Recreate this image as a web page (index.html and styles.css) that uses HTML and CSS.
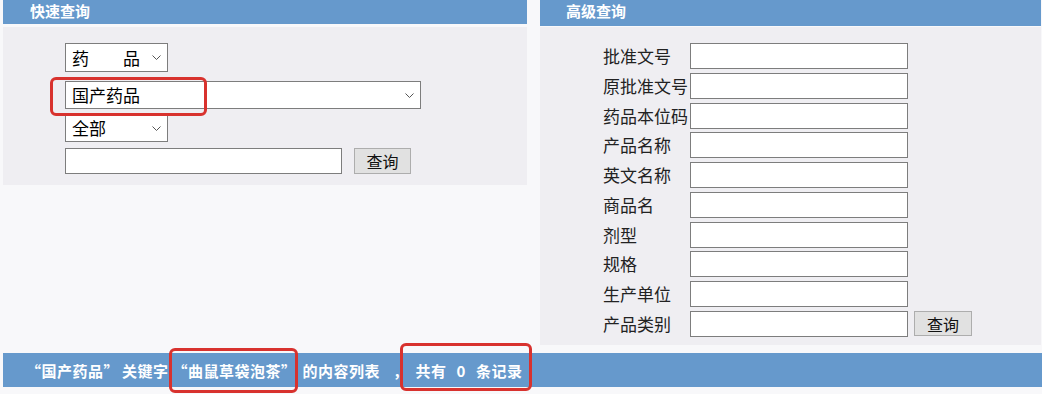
FILE: index.html
```html
<!DOCTYPE html>
<html lang="zh-CN">
<head>
<meta charset="utf-8">
<title>药品查询</title>
<link rel="stylesheet" href="styles.css">
</head>
<body>
<div class="page">
  <div class="top">
    <section class="col col-left">
      <div class="bar bar-left"><span class="bar-title">快速查询</span></div>
      <div class="panel quick">
        <div class="select sel-1"><span>药　　品</span><svg class="chev" width="9" height="5" viewBox="0 0 9 5"><polyline points="0.5,0.5 4.5,4.5 8.5,0.5"/></svg></div>
        <div class="select sel-2"><span>国产药品</span><svg class="chev" width="9" height="5" viewBox="0 0 9 5"><polyline points="0.5,0.5 4.5,4.5 8.5,0.5"/></svg></div>
        <div class="select sel-3"><span>全部</span><svg class="chev" width="9" height="5" viewBox="0 0 9 5"><polyline points="0.5,0.5 4.5,4.5 8.5,0.5"/></svg></div>
        <div class="search-row">
          <input class="field field-quick" type="text">
          <button class="btn btn-quick" type="button">查询</button>
        </div>
      </div>
    </section>
    <section class="col col-right">
      <div class="bar bar-right"><span class="bar-title">高级查询</span></div>
      <div class="panel adv">
        <div class="adv-grid">
          <label class="lbl">批准文号</label><input class="field" type="text"><span></span>
          <label class="lbl">原批准文号</label><input class="field" type="text"><span></span>
          <label class="lbl">药品本位码</label><input class="field" type="text"><span></span>
          <label class="lbl">产品名称</label><input class="field" type="text"><span></span>
          <label class="lbl">英文名称</label><input class="field" type="text"><span></span>
          <label class="lbl">商品名</label><input class="field" type="text"><span></span>
          <label class="lbl">剂型</label><input class="field" type="text"><span></span>
          <label class="lbl">规格</label><input class="field" type="text"><span></span>
          <label class="lbl">生产单位</label><input class="field" type="text"><span></span>
          <label class="lbl">产品类别</label><input class="field" type="text"><button class="btn btn-adv" type="button">查询</button>
        </div>
      </div>
    </section>
  </div>
  <div class="result-bar">
    <span class="seg">“国产药品”</span>
    <span class="seg g1">关键字</span>
    <span class="seg g2">“曲鼠草袋泡茶”</span>
    <span class="seg g3">的内容列表</span>
    <span class="seg g4">，</span>
    <span class="seg g5">共有</span>
    <span class="seg g6">0</span>
    <span class="seg g6">条记录</span>
  </div>
  <div class="mark mark-a"></div>
  <div class="mark mark-b"></div>
  <div class="mark mark-c"></div>
</div>
</body>
</html>
```

FILE: styles.css
```css
html, body {
  margin: 0;
  padding: 0;
}
body {
  background: #f8f8fa;
  font-family: "Noto Sans CJK SC", "Microsoft YaHei", sans-serif;
  color: #111;
}
.page {
  position: relative;
  width: 1042px;
  height: 394px;
  overflow: hidden;
}
.top {
  display: flex;
  padding-left: 3px;
  gap: 13px;
  align-items: flex-start;
}
.col-left { width: 524px; }
.col-right { width: 501px; }

.bar {
  background: #6699cc;
  color: #fff;
  font-size: 15px;
  font-weight: bold;
  box-sizing: border-box;
}
.bar-left {
  height: 24px;
  line-height: 21px;
  padding-left: 27px;
  margin-bottom: 3px;
}
.bar-right {
  height: 26px;
  line-height: 22px;
  padding-left: 26px;
  margin-bottom: 1px;
}

.panel {
  background: #efeef2;
  box-sizing: border-box;
}
.quick {
  height: 158px;
  padding: 16px 0 0 62px;
  display: flex;
  flex-direction: column;
  align-items: flex-start;
}
.select {
  display: flex;
  align-items: center;
  justify-content: space-between;
  box-sizing: border-box;
  background: #fff;
  border: 1px solid #7d7d7d;
  padding: 0 6px 0 6px;
  font-size: 17px;
  line-height: 20px;
  color: #000;
}
.chev {
  fill: none;
  stroke: #555;
  stroke-width: 1;
}
.sel-1 { width: 103px; height: 29px; margin-bottom: 9px; }
.sel-2 { width: 356px; height: 28px; margin-bottom: 5px; }
.sel-3 { width: 103px; height: 28px; margin-bottom: 6px; }

.search-row {
  display: flex;
  gap: 12px;
}
.field {
  box-sizing: border-box;
  height: 26px;
  border: 1px solid #7d7d7d;
  background: #fff;
  margin: 0;
  padding: 0 4px;
  font-family: inherit;
  font-size: 16px;
}
.field-quick { width: 277px; }

.btn {
  box-sizing: border-box;
  background: #e1e1e1;
  border: 1px solid #adadad;
  margin: 0;
  padding: 0;
  font-family: inherit;
  font-size: 16px;
  line-height: 20px;
  color: #111;
}
.btn-quick { width: 57px; height: 26px; }

.adv {
  height: 318px;
  padding: 16px 0 0 63px;
}
.adv-grid {
  display: grid;
  grid-template-columns: 87px 218px auto;
  grid-auto-rows: 26px;
  row-gap: 3.75px;
  align-items: center;
}
.lbl {
  font-size: 17px;
  line-height: 26px;
  color: #222;
  white-space: nowrap;
}
.adv-grid .field { width: 218px; }
.btn-adv {
  width: 58px;
  height: 25px;
  margin-left: 6px;
}

.result-bar {
  margin: 8px 0 0 3px;
  height: 34px;
  background: #6699cc;
  color: #fff;
  font-size: 15px;
  font-weight: bold;
  letter-spacing: 0.5px;
  display: flex;
  align-items: center;
  padding-left: 23px;
  white-space: nowrap;
}
.g1 { margin-left: 3px; }
.g2 { margin-left: 4px; }
.g3 { margin-left: 6px; }
.g4 { margin-left: 13px; }
.g5 { margin-left: 7px; }
.g6 { margin-left: 10px; }

.mark {
  position: absolute;
  box-sizing: border-box;
  border: 3px solid #d8322e;
  border-radius: 6px;
}
.mark-a { left: 50px; top: 77px; width: 157px; height: 39px; }
.mark-b { left: 169px; top: 348px; width: 129px; height: 45px; }
.mark-c { left: 400px; top: 343px; width: 132px; height: 48px; }
```
